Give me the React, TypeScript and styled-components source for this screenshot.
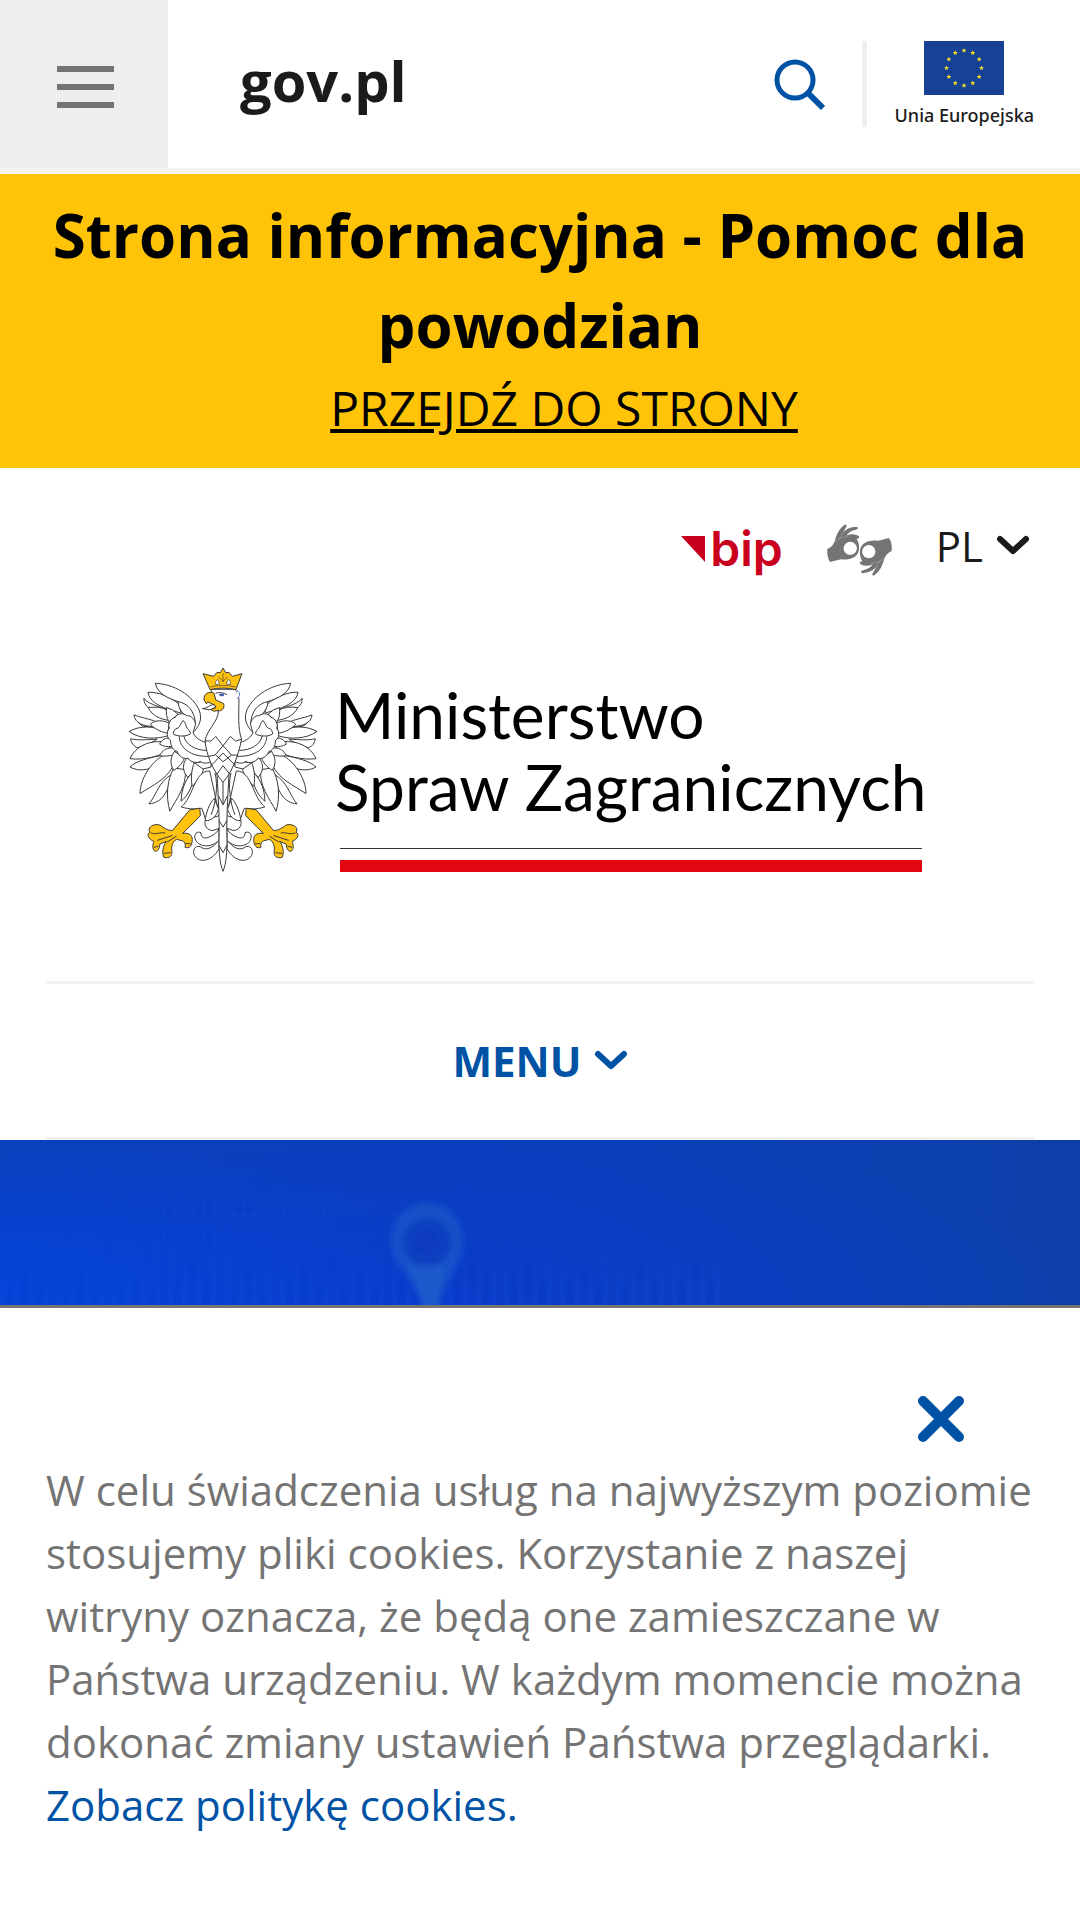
import React, { useState } from "react";
import styled, { createGlobalStyle } from "styled-components";

const blue = "#0052a5";

const GlobalStyle = createGlobalStyle`
  *, *::before, *::after { box-sizing: border-box; }
  body {
    margin: 0;
    background: #fff;
    color: #1b1b1b;
    font-family: "Open Sans", "Noto Sans", sans-serif;
  }
  button {
    margin: 0;
    padding: 0;
    border: 0;
    background: none;
    color: inherit;
    font: inherit;
    cursor: pointer;
  }
  a { color: inherit; text-decoration: none; }
  svg { display: block; flex: none; }
`;

const Page = styled.div`
  display: flex;
  flex-direction: column;
  min-height: 100vh;
`;

const TopBar = styled.header`
  display: flex;
  align-items: stretch;
  height: 174px;
  border-bottom: 6px solid #f4f2f4;
`;

const Hamburger = styled.button`
  display: flex;
  flex-direction: column;
  align-items: center;
  justify-content: center;
  gap: 12px;
  width: 168px;
  padding-top: 6px;
  background: #eee;
`;

const HamburgerLine = styled.span`
  width: 57px;
  height: 6px;
  margin-left: 3px;
  background: #747474;
`;

const SiteName = styled.a`
  align-self: center;
  flex: 1;
  padding: 0 0 8px 72px;
  font-size: 56px;
  line-height: 72px;
  font-weight: 700;
`;

const TopTools = styled.div`
  display: flex;
  align-items: center;
  padding-right: 46px;
`;

const SearchButton = styled.button`
  padding: 2px 36px 0;
`;

const EuLink = styled.a`
  display: flex;
  flex-direction: column;
  align-items: center;
  justify-content: space-between;
  height: 86px;
  padding-left: 28px;
  border-left: 5px solid #efefef;
  font-family: "Noto Sans", sans-serif;
  font-size: 18px;
  line-height: 24px;
  font-weight: 500;
`;

const Notice = styled.section`
  padding: 16px 45px 24px;
  background: #ffc408;
  color: #000;
  text-align: center;
`;

const NoticeTitle = styled.h2`
  margin: 0 0 2px;
  font-size: 60px;
  line-height: 90px;
  font-weight: 700;
`;

const NoticeLink = styled.a`
  display: inline-block;
  margin-left: 48px;
  font-size: 48px;
  line-height: 72px;
  text-decoration: underline;
`;

const Content = styled.div`
  padding: 0 45px;
`;

const Tools = styled.nav`
  display: flex;
  align-items: center;
  justify-content: flex-end;
  gap: 43px;
  height: 96px;
  margin-top: 32px;
  padding-right: 5px;
`;

const BipLink = styled.a`
  display: flex;
  align-items: center;
  gap: 5px;
  padding-top: 2px;
  color: #c8001e;
  font-family: Inter, sans-serif;
  font-size: 48px;
  line-height: 56px;
  font-weight: 600;
`;

const SignLink = styled.a`
  padding-top: 4px;
`;

const LanguageButton = styled.button`
  display: flex;
  align-items: center;
  gap: 13px;
  padding-bottom: 6px;
  font-size: 42px;
  line-height: 63px;
`;

const Brand = styled.a`
  display: flex;
  align-items: flex-start;
  gap: 18px;
  margin: 71px 0 108px 84px;
  color: #000;
`;

const BrandText = styled.div`
  padding-top: 12px;
`;

const BrandName = styled.h1`
  margin: 0;
  font-family: Lato, sans-serif;
  font-size: 64px;
  line-height: 72px;
  font-weight: 400;
`;

const FlagStripe = styled.div`
  height: 24px;
  margin: 25px 4px 0 5px;
  border-top: 1px solid #333;
  border-bottom: 12px solid #e30613;
`;

const MenuButton = styled.button`
  display: flex;
  align-items: center;
  justify-content: center;
  gap: 12px;
  width: 100%;
  height: 159px;
  border-top: 3px solid #f2f2f2;
  border-bottom: 3px solid #f2f2f2;
  color: ${blue};
  font-size: 42px;
  line-height: 63px;
  font-weight: 700;
`;

const Hero = styled.section`
  display: flex;
  flex: 1;
  min-height: 165px;
  overflow: hidden;
  background:
    radial-gradient(ellipse 480px 150px at 0 90%, #0443d8, transparent),
    radial-gradient(ellipse 700px 180px at 36% 100%, #0a3acb, transparent),
    linear-gradient(95deg, #0b40bb, #0a3fbc 50%, #0c3fa8);
`;

const CookieBar = styled.aside`
  position: sticky;
  bottom: 0;
  padding: 87px 46px 84px;
  border-top: 3px solid #747474;
  background: #fff;
  color: #747474;
`;

const CloseButton = styled.button`
  display: block;
  margin: 0 69px 15px auto;
`;

const CookieText = styled.p`
  margin: 0;
  font-size: 42px;
  line-height: 63px;
`;

const CookieLink = styled.a`
  display: block;
  color: ${blue};
`;

function Chevron() {
  return (
    <svg width="34" height="21" viewBox="0 0 34 21" fill="none" stroke="currentColor" strokeWidth="6" strokeLinecap="round" strokeLinejoin="round" aria-hidden="true">
      <path d="M4 4 17 16 30 4" />
    </svg>
  );
}

function EuFlag() {
  const stars = Array.from({ length: 12 }, (_, i) => {
    const a = (i * Math.PI) / 6;
    return { x: 40 + 17.5 * Math.sin(a), y: 27 - 17.5 * Math.cos(a) };
  });
  return (
    <svg width="80" height="54" viewBox="0 0 80 54" aria-hidden="true">
      <rect width="80" height="54" fill="#164194" />
      {stars.map((s, i) => (
        <path
          key={i}
          transform={`translate(${s.x} ${s.y})`}
          d="M0-2.6 .7-.8H2.5L1.1.4 1.6 2.2 0 1.1-1.6 2.2-1.1.4-2.5-.8H-.7Z"
          fill="#f1e632"
        />
      ))}
    </svg>
  );
}

function SigningHand() {
  return (
    <g>
      <path d="M504 148Q522 140 527 122C533 98 544 84 556 75Q565 72 561 82L549 101Q564 82 592 81Q602 86 590 90Q570 94 562 107Q582 99 598 108Q604 116 592 117C600 128 602 145 598 156C592 174 570 182 545 179L512 187Q502 172 504 148Z" />
      <circle cx="573" cy="146" r="20" fill="#fff" />
      <path d="M526 128Q542 112 566 111M549 101 540 118" fill="none" stroke="#a5a5a5" strokeWidth="2" />
    </g>
  );
}

function SignLanguageIcon() {
  return (
    <svg width="67" height="54" viewBox="500 70 202 162" fill="#747474" aria-hidden="true">
      <SigningHand />
      <g transform="rotate(180 601 151)">
        <SigningHand />
      </g>
    </svg>
  );
}

/* One half of the eagle: wing, thigh, tail curls and claw. */
function EagleHalf() {
  return (
    <g>
      <g transform="translate(42 42)">
        <path d="M43 178C48 168 60 168 75 172L92 192 60 190Q50 186 43 178Z" />
        <path d="M60 105C68 118 95 128 128 138L110 150C85 145 58 130 60 105Z" />
        <path d="M72 87C105 85 140 103 165 122L172 150 130 137C100 125 78 115 72 87Z" />
        <path d="M94 60C150 62 205 95 226 140C238 170 224 192 208 208L196 170 163 115C130 104 102 92 94 60Z" />
        <path d="M163 115C192 120 214 145 215 185L190 160C175 150 163 135 163 115Z" />
        <path d="M73 133C95 130 115 132 128 140L136 172C110 168 84 158 73 133Z" />
        <path d="M128 133Q146 136 162 153L150 164 135 176Q125 158 128 133Z" />
        <path d="M30 155C45 162 80 168 95 175L90 190C60 190 32 180 30 155Z" />
        <path d="M15 205C45 188 90 185 132 208L132 218C100 228 50 230 15 205Z" />
        <path d="M79 183C95 168 120 172 136 180L132 210C115 208 95 200 79 183Z" />
        <path d="M20 227C40 232 70 230 100 228L70 246 40 254Q22 246 20 227Z" />
        <path d="M18 287C35 250 75 228 132 238L140 262C105 280 60 292 18 287Z" />
        <path d="M107 243C115 228 125 224 138 225L146 250C130 252 118 250 107 243Z" />
        <path d="M18 312C38 292 75 285 122 275L120 292C90 318 50 330 18 312Z" />
        <path d="M75 423C95 400 100 370 128 345L142 335C135 385 115 420 75 423Z" />
        <path d="M48 392C48 345 90 275 152 265L146 312C125 350 90 365 48 392Z" />
        <path d="M107 278C115 262 130 250 155 256L152 275C135 280 118 280 107 278Z" />
        <path d="M172 415C172 380 186 350 200 335L212 340C205 375 190 400 172 415Z" />
        <path d="M138 445C125 400 130 350 150 315L185 320C188 370 160 405 138 445Z" />
        <path d="M150 322C135 300 142 280 152 265L182 285C175 305 160 315 150 322Z" />
        <path d="M192 343C175 325 175 300 190 285L212 298C212 320 202 333 192 343Z" />
        <path d="M205 370C200 340 205 315 212 298L240 312C238 335 222 355 205 370Z" />
        <path d="M210 298 262 296 262 312 238 318Z" />
        <path d="M208 208C214 224 228 232 245 238L262 296C248 302 238 302 230 295C220 302 200 298 192 285C180 290 165 280 160 265C148 262 140 250 140 232C128 225 127 205 137 195C130 185 140 165 155 162C155 155 175 145 190 158C200 154 216 172 215 185Z" />
        <path d="M178 172C168 182 170 190 162 195C152 195 150 205 148 212C160 222 190 220 200 212C200 205 195 200 190 195C186 188 186 180 178 172Z" />
        <path d="M166 220C168 255 200 282 258 280M180 218C185 245 215 262 250 262" fill="none" />
      </g>
      <path d="M300 366C270 364 258 400 246 425C236 450 225 465 214 474C240 483 265 480 276 478L288 512 325 480Z" />
      <path d="M288 512C280 528 292 546 310 545L330 538 330 500Z" />
      <path d="M328 600C305 642 262 645 252 615C249 598 260 590 272 594C285 606 310 602 328 572Z" />
      <path d="M328 575C300 602 262 592 256 570C252 555 262 546 274 552C272 566 285 572 300 564C315 558 322 550 328 540Z" />
      <path d="M314 448C298 465 290 490 286 515C306 518 322 500 326 480Z" />
      <path d="M316 372C326 410 318 465 304 498" fill="none" />
      <path
        fill="#ffc20e"
        d="M240 483 270 478 272 500 238 535 218 554C240 550 250 562 247 578C246 592 238 600 226 596C228 584 224 580 218 576L200 572C186 580 184 596 186 608C188 622 178 630 162 626C156 616 158 590 170 578L150 586C148 600 146 606 136 608C126 604 128 586 132 578C116 572 108 556 120 550C112 540 124 524 148 528C162 536 172 546 188 545Z"
      />
      <path d="M122 552C140 560 150 548 166 553M142 575 188 560M172 580 200 562M162 614 182 612M228 584 244 586M132 596 146 592" fill="none" />
    </g>
  );
}

function Eagle() {
  return (
    <svg width="188" height="206" viewBox="57 54 566 618" fill="#fff" stroke="#3a3a3a" strokeWidth="3" strokeLinejoin="round" role="img" aria-label="Godło">
      <EagleHalf />
      <g transform="translate(680 0) scale(-1 1)">
        <EagleHalf />
      </g>
      <path d="M322 375 358 375C354 450 350 520 352 570C352 610 350 645 340 668C330 645 328 610 328 570C330 520 326 450 322 375Z" />
      <path d="M326 440 340 468 354 440M328 515 340 535 352 515M328 590 340 612 352 590M340 400V468" fill="none" />
      <path d="M326 184C328 215 292 240 286 275C290 320 310 365 340 400C370 365 386 320 396 270C384 240 388 190 388 148L378 120 302 120 314 140Z" />
      <path d="M286 275 304 276 318 262 340 290 362 262 378 276 396 270M340 290 316 318 296 322M340 290 366 318 385 318M318 318 340 338 366 318M306 348 340 312 376 348M322 375 340 350 360 375" fill="none" />
      <path d="M283 152C280 134 298 124 313 132L318 152 342 163C346 178 336 187 325 184L312 186 302 180 318 176 312 166 294 158 290 164Z" fill="#ffc20e" />
      <path d="M278 178C292 180 300 164 314 166L318 174 300 182Z" />
      <path d="M318 132C328 128 342 130 352 136" fill="none" />
      <ellipse cx="336" cy="137" rx="8" ry="4" fill="#4a62b0" stroke="none" />
      <path d="M380 124C392 124 394 142 382 148" stroke="#5a7fc0" />
      <path d="M280 73 312 81 322 69 332 70 340 56 348 70 358 69 368 81 397 73 379 121C355 115 325 115 301 121Z" fill="#ffc20e" />
      <path d="M318 96 324 90 330 104 318 106ZM350 104 356 90 362 96 362 106Z" strokeWidth="2" />
      <path d="M302 113C325 107 355 107 378 113M340 72V98M326 82 340 96 354 82" fill="none" strokeWidth="2" />
    </svg>
  );
}

function HeroArt() {
  return (
    <svg width="100%" height="165" viewBox="0 0 1080 165" preserveAspectRatio="xMinYMin slice" aria-hidden="true">
      <defs>
        <pattern id="streaks" width="14" height="165" patternUnits="userSpaceOnUse">
          <rect width="6" height="165" fill="#1654e0" />
        </pattern>
        <pattern id="dots" width="10" height="10" patternUnits="userSpaceOnUse">
          <circle cx="4" cy="4" r="2" fill="#2460e0" />
        </pattern>
        <linearGradient id="fade" x2="0" y2="1">
          <stop offset=".5" stopColor="#fff" stopOpacity="0" />
          <stop offset="1" stopColor="#fff" stopOpacity=".18" />
        </linearGradient>
        <radialGradient id="spot">
          <stop stopColor="#fff" stopOpacity=".2" />
          <stop offset="1" stopColor="#fff" stopOpacity="0" />
        </radialGradient>
        <mask id="lower"><path d="M0 0H720V165H0Z" fill="url(#fade)" /></mask>
        <mask id="cloud"><ellipse cx="230" cy="80" rx="300" ry="60" fill="url(#spot)" /></mask>
        <filter id="soft"><feGaussianBlur stdDeviation="3" /></filter>
      </defs>
      <rect width="1080" height="165" fill="url(#streaks)" mask="url(#lower)" />
      <rect width="1080" height="165" fill="url(#dots)" mask="url(#cloud)" />
      <g filter="url(#soft)">
        <path d="M427 63C450 63 463 82 463 103C463 128 443 138 438 172H424C419 138 391 128 391 103C391 82 404 63 427 63Z" fill="#2464cc" opacity=".5" />
        <path d="M408 126H446L437 172H425Z" fill="#2464cc" opacity=".5" />
        <circle cx="427" cy="102" r="24" fill="#0a3bbd" />
        <circle cx="427" cy="102" r="17" fill="none" stroke="#164bc6" strokeWidth="3" />
      </g>
    </svg>
  );
}

export default function App() {
  const [cookiesOpen, setCookiesOpen] = useState(true);
  return (
    <Page>
      <GlobalStyle />
      <TopBar>
        <Hamburger aria-label="Menu główne">
          <HamburgerLine />
          <HamburgerLine />
          <HamburgerLine />
        </Hamburger>
        <SiteName href="#">gov.pl</SiteName>
        <TopTools>
          <SearchButton aria-label="Szukaj">
            <svg width="52" height="52" viewBox="0 0 52 52" fill="none" stroke={blue} strokeWidth="5" aria-hidden="true">
              <circle cx="21" cy="21" r="18" />
              <path d="M34 34 49 49" strokeWidth="6" />
            </svg>
          </SearchButton>
          <EuLink href="#">
            <EuFlag />
            Unia Europejska
          </EuLink>
        </TopTools>
      </TopBar>

      <Notice>
        <NoticeTitle>Strona informacyjna - Pomoc dla powodzian</NoticeTitle>
        <NoticeLink href="#">PRZEJDŹ DO STRONY</NoticeLink>
      </Notice>

      <Content>
        <Tools>
          <BipLink href="#">
            <svg width="24" height="26" viewBox="0 0 24 26" aria-hidden="true">
              <path d="M0 0H24V26Z" fill="currentColor" />
            </svg>
            bip
          </BipLink>
          <SignLink href="#" aria-label="Tłumacz języka migowego">
            <SignLanguageIcon />
          </SignLink>
          <LanguageButton>
            PL
            <Chevron />
          </LanguageButton>
        </Tools>
        <Brand href="#">
          <Eagle />
          <BrandText>
            <BrandName>
              Ministerstwo
              <br />
              Spraw Zagranicznych
            </BrandName>
            <FlagStripe />
          </BrandText>
        </Brand>
        <MenuButton>
          MENU
          <Chevron />
        </MenuButton>
      </Content>

      <Hero>
        <HeroArt />
      </Hero>

      {cookiesOpen && (
        <CookieBar>
          <CloseButton aria-label="Zamknij" onClick={() => setCookiesOpen(false)}>
            <svg width="48" height="48" viewBox="0 0 48 48" stroke={blue} strokeWidth="10" strokeLinecap="round" aria-hidden="true">
              <path d="M6 6 42 42M42 6 6 42" />
            </svg>
          </CloseButton>
          <CookieText>
            W celu świadczenia usług na najwyższym poziomie stosujemy pliki cookies. Korzystanie z naszej witryny
            oznacza, że będą one zamieszczane w Państwa urządzeniu. W każdym momencie można dokonać zmiany ustawień
            Państwa przeglądarki.
            <CookieLink href="#">Zobacz politykę cookies.</CookieLink>
          </CookieText>
        </CookieBar>
      )}
    </Page>
  );
}
